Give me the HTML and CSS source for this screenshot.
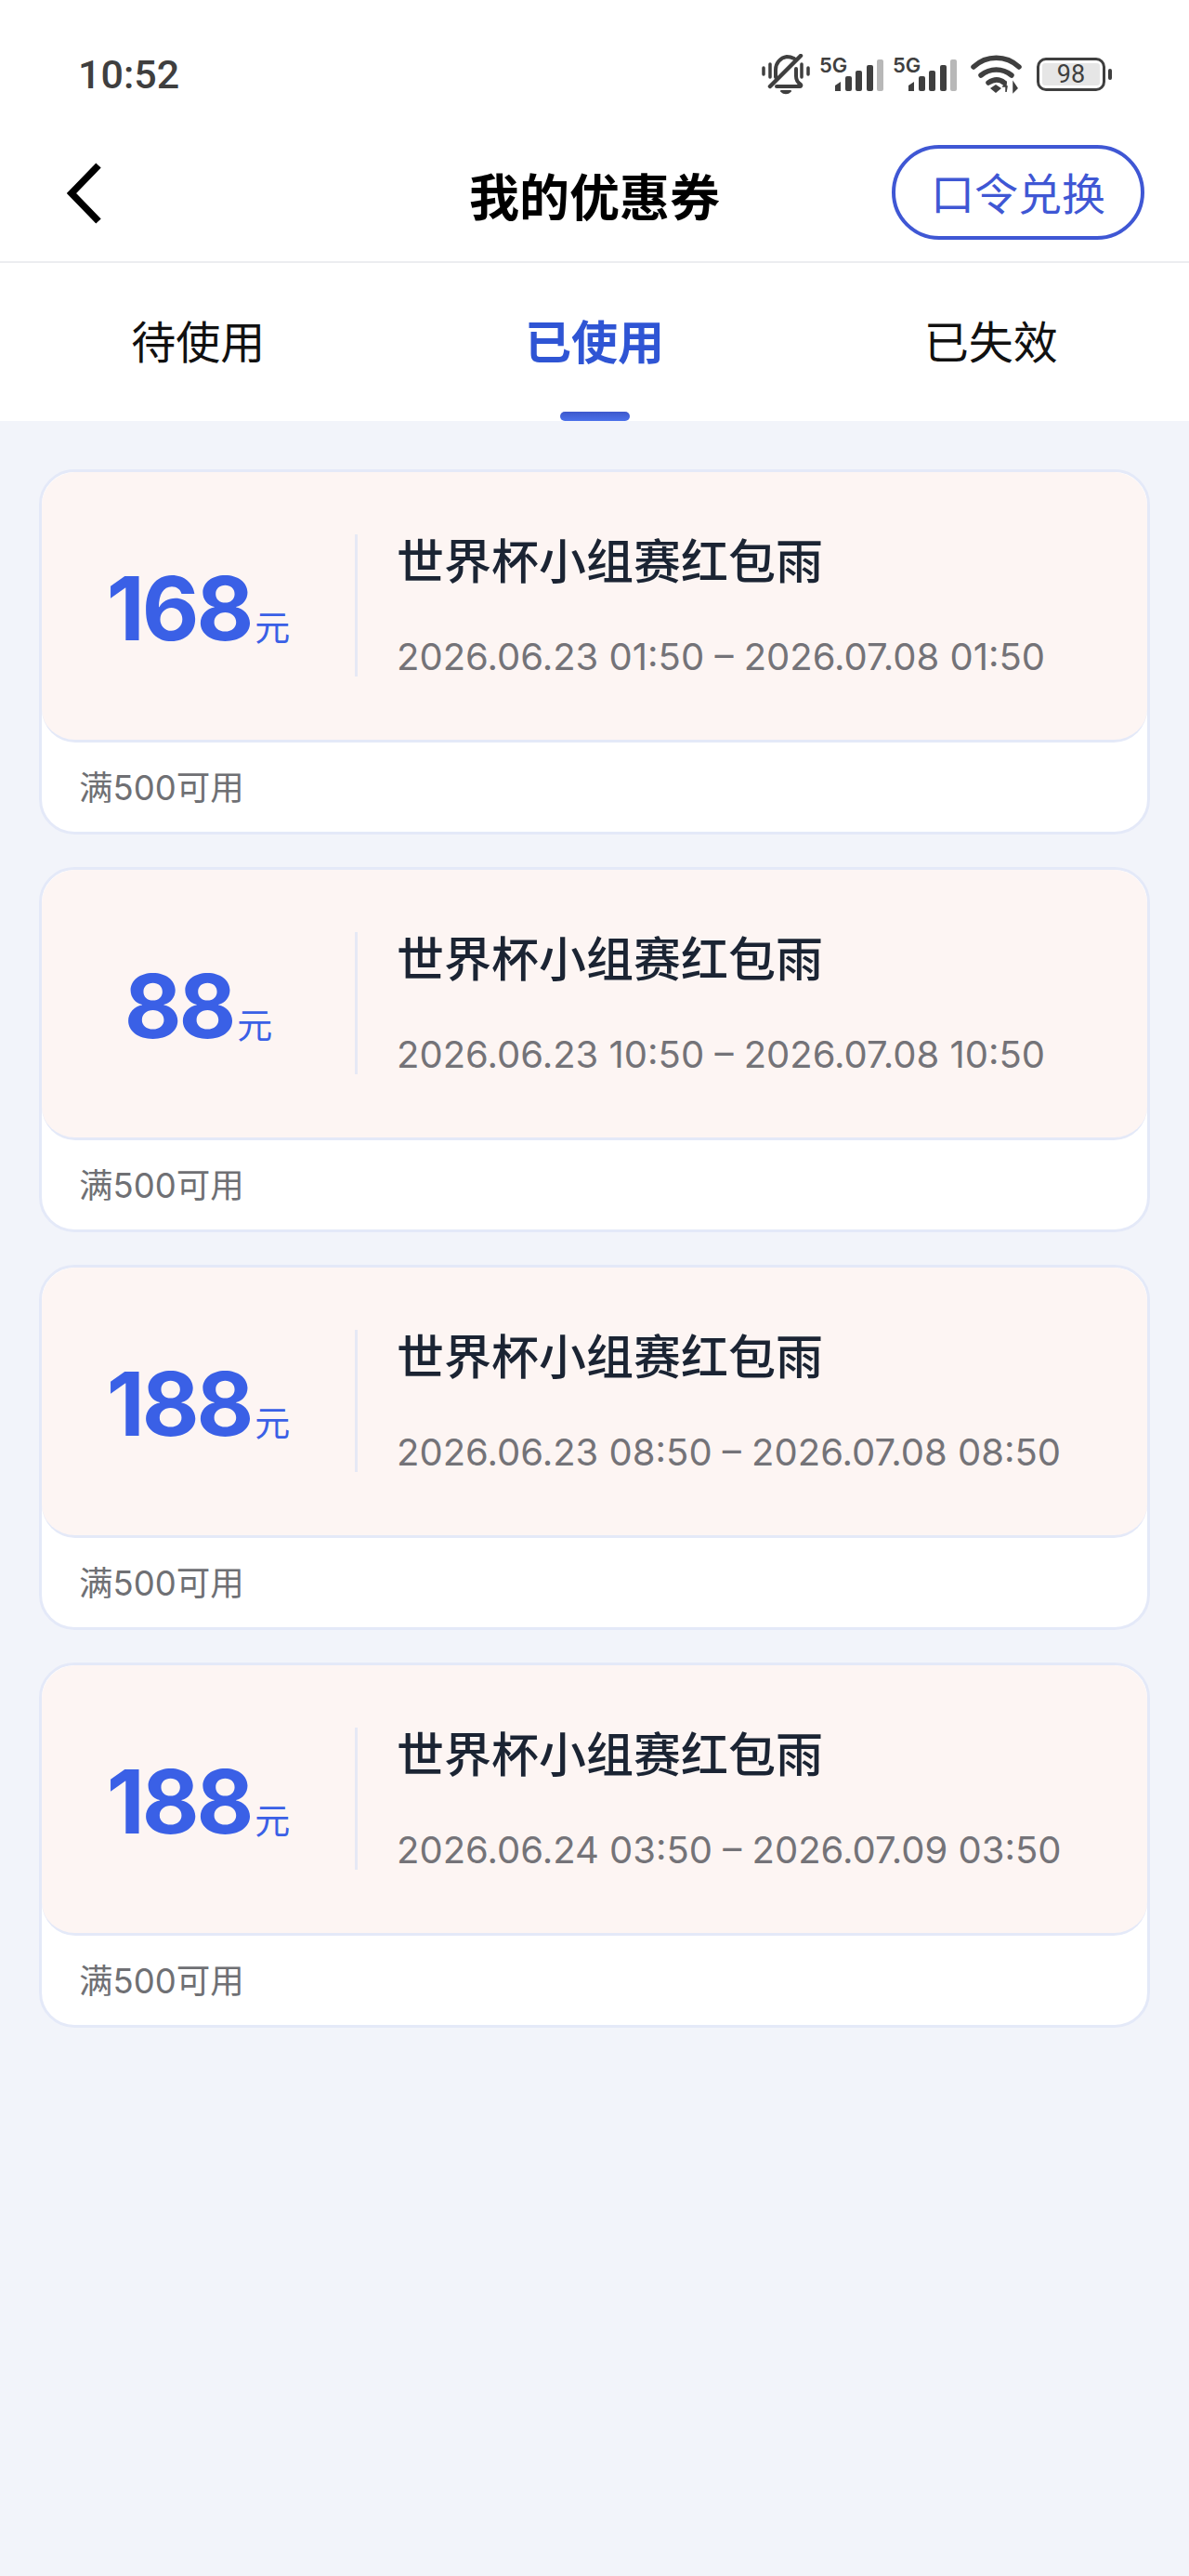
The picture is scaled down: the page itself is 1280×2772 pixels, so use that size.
FILE: index.html
```html
<!DOCTYPE html>
<html lang="zh-CN">

<head>
  <meta charset="UTF-8">
  <meta name="viewport" content="width=device-width, initial-scale=1.0">
  <title>我的优惠券</title>
  <link rel="stylesheet" href="styles.css">
</head>

<body>
  <div class="status-bar">
    <div class="status-time">10:52</div>
    <div class="status-icons">
      <svg class="icon-bell" width="52" height="44" viewBox="0 0 52 44" fill="none" stroke="#3f3f3f" stroke-linecap="round" stroke-linejoin="round">
        <path d="M2 15v7M9 11v14M43 11v14M50 15v7" stroke-width="3.5"/>
        <path d="M15 25V17c0-7 5-13 12-14 3 0 6 1 8 2" stroke-width="4"/>
        <path d="M37 16v8c0 4 2 7 5 9 1 1 0 2-1 2H16" stroke-width="4"/>
        <path d="M42 2 9 35" stroke-width="4.5"/>
        <path d="M21 40c3 3 7 3 10 0z" fill="#3f3f3f" stroke-width="2"/>
      </svg>
      <svg class="icon-signal" width="69" height="48" viewBox="0 -6 69 48">
        <text class="signal-text" x="0" y="16">5G</text>
        <g fill="#3f3f3f">
          <path d="M17 30l6-4v10h-6z"/>
          <rect x="28" y="20" width="7" height="16" rx="2"/>
          <rect x="39" y="14" width="7" height="22" rx="2"/>
          <rect x="51" y="8" width="7" height="28" rx="2"/>
        </g>
        <rect x="62" y="2" width="7" height="34" rx="2" fill="#b8b8b8"/>
      </svg>
      <svg class="icon-signal" width="69" height="48" viewBox="0 -6 69 48">
        <text class="signal-text" x="0" y="16">5G</text>
        <g fill="#3f3f3f">
          <path d="M17 30l6-4v10h-6z"/>
          <rect x="28" y="20" width="7" height="16" rx="2"/>
          <rect x="39" y="14" width="7" height="22" rx="2"/>
          <rect x="51" y="8" width="7" height="28" rx="2"/>
        </g>
        <rect x="62" y="2" width="7" height="34" rx="2" fill="#b8b8b8"/>
      </svg>
      <svg class="icon-wifi" width="55" height="42" viewBox="0 0 55 42" fill="none" stroke="#3f3f3f" stroke-width="5.5" stroke-linecap="round">
        <path d="M3 13c14-13 35-13 49 0"/>
        <path d="M11 22c10-8 23-8 33 0"/>
        <path d="M19 30c6-4 12-4 17 0"/>
        <path d="M21 36l6-4 6 4-6 5z" fill="#3f3f3f" stroke="none"/>
        <path d="M39 34l-4 0 3-4v10zM46 30v10l4-4z" fill="#3f3f3f" stroke="#3f3f3f" stroke-width="1.5"/>
      </svg>
      <div class="battery">
        <div class="battery-body"><span class="battery-level">98</span></div>
        <div class="battery-nub"></div>
      </div>
    </div>
  </div>

  <div class="nav-bar">
    <svg class="back-icon" width="40" height="68" viewBox="0 0 40 68" fill="none" stroke="#000" stroke-width="7.5">
      <path d="M36 4 7 34l29 30"/>
    </svg>
    <div class="nav-title">我的优惠券</div>
    <div class="redeem-btn">口令兑换</div>
  </div>

  <div class="tabs">
    <div class="tab">待使用</div>
    <div class="tab active">已使用</div>
    <div class="tab">已失效</div>
  </div>

  <div class="coupon-list">
    <div class="coupon">
      <div class="coupon-top">
        <div class="amount"><span class="amount-num">168</span><span class="amount-unit">元</span></div>
        <div class="coupon-info">
          <div class="coupon-name">世界杯小组赛红包雨</div>
          <div class="coupon-date">2026.06.23 01:50 – 2026.07.08 01:50</div>
        </div>
      </div>
      <div class="coupon-rule">满500可用</div>
    </div>

    <div class="coupon">
      <div class="coupon-top">
        <div class="amount"><span class="amount-num">88</span><span class="amount-unit">元</span></div>
        <div class="coupon-info">
          <div class="coupon-name">世界杯小组赛红包雨</div>
          <div class="coupon-date">2026.06.23 10:50 – 2026.07.08 10:50</div>
        </div>
      </div>
      <div class="coupon-rule">满500可用</div>
    </div>

    <div class="coupon">
      <div class="coupon-top">
        <div class="amount"><span class="amount-num">188</span><span class="amount-unit">元</span></div>
        <div class="coupon-info">
          <div class="coupon-name">世界杯小组赛红包雨</div>
          <div class="coupon-date">2026.06.23 08:50 – 2026.07.08 08:50</div>
        </div>
      </div>
      <div class="coupon-rule">满500可用</div>
    </div>

    <div class="coupon">
      <div class="coupon-top">
        <div class="amount"><span class="amount-num">188</span><span class="amount-unit">元</span></div>
        <div class="coupon-info">
          <div class="coupon-name">世界杯小组赛红包雨</div>
          <div class="coupon-date">2026.06.24 03:50 – 2026.07.09 03:50</div>
        </div>
      </div>
      <div class="coupon-rule">满500可用</div>
    </div>
  </div>
</body>

</html>
```

FILE: styles.css
```css
* {
  margin: 0;
  padding: 0;
  box-sizing: border-box;
}

body {
  font-family: "Inter", "Noto Sans CJK SC", sans-serif;
  background-color: #f2f4fa;
  min-height: 100vh;
}

.status-bar {
  display: flex;
  justify-content: space-between;
  align-items: center;
  height: 132px;
  padding: 28px 83px 0 84px;
  background-color: #fff;
}

.status-time {
  font-family: "Roboto", sans-serif;
  font-size: 43px;
  font-weight: 500;
  color: #3f3f3f;
}

.status-icons {
  display: flex;
  align-items: center;
}

.icon-signal {
  margin-left: 10px;
}

.signal-text {
  font-family: "Inter", sans-serif;
  font-size: 22px;
  font-weight: 600;
  fill: #3f3f3f;
}

.icon-wifi {
  margin-left: 15px;
}

.battery {
  display: flex;
  align-items: center;
  margin-left: 16px;
}

.battery-body {
  width: 74px;
  height: 36px;
  padding: 3px;
  border: 3px solid #3f3f3f;
  border-radius: 10px;
}

.battery-level {
  display: block;
  height: 100%;
  background-color: #e6e6e6;
  border-radius: 3px;
  font-family: "Roboto", sans-serif;
  font-size: 27px;
  line-height: 24px;
  text-align: center;
  color: #3f3f3f;
}

.battery-nub {
  width: 4px;
  height: 12px;
  margin-left: 3px;
  border-radius: 2px;
  background-color: #3f3f3f;
}

.nav-bar {
  display: grid;
  grid-template-columns: 1fr auto 1fr;
  align-items: center;
  height: 151px;
  padding: 0 48px 0 70px;
  background-color: #fff;
  border-bottom: 2px solid #ecedf0;
}

.back-icon {
  margin-top: 2px;
}

.nav-title {
  font-family: "Noto Sans CJK SC", sans-serif;
  font-size: 54px;
  font-weight: 700;
  color: #000;
  margin: 5px 0 0 -22px;
}

.redeem-btn {
  justify-self: end;
  width: 272px;
  height: 102px;
  border: 4px solid #3f57d4;
  border-radius: 51px;
  font-family: "Noto Sans CJK SC", sans-serif;
  font-size: 47px;
  line-height: 92px;
  text-align: center;
  color: #3f57d4;
}

.tabs {
  display: flex;
  height: 170px;
  background-color: #fff;
}

.tab {
  flex: 1;
  position: relative;
  font-family: "Noto Sans CJK SC", sans-serif;
  font-size: 48px;
  line-height: 164px;
  text-align: center;
  color: #111;
}

.tab.active {
  font-size: 50px;
  font-weight: 700;
  color: #2f55d4;
}

.tab.active::after {
  content: "";
  position: absolute;
  left: 50%;
  bottom: 0;
  width: 75px;
  height: 10px;
  margin-left: -37px;
  border-radius: 5px;
  background: linear-gradient(#3d58cc, #4a70ea);
}

.coupon-list {
  display: flex;
  flex-direction: column;
  gap: 35px;
  padding: 52px 42px;
}

.coupon {
  height: 393px;
  background-color: #fff;
  border: 3px solid #e4e9f8;
  border-radius: 38px;
}

.coupon-top {
  display: flex;
  align-items: flex-start;
  height: 291px;
  padding-top: 67px;
  background-color: #fdf5f3;
  border-bottom: 3px solid #e4e9f8;
  border-radius: 36px;
}

.amount {
  display: flex;
  justify-content: center;
  align-items: baseline;
  width: 340px;
  height: 153px;
  padding-top: 30px;
  border-right: 3px solid #e6e9f5;
}

.amount-num {
  font-size: 95px;
  font-weight: 700;
  line-height: 100px;
  letter-spacing: -3px;
  color: #3a60e6;
}

.amount-unit {
  margin-left: 4px;
  font-family: "Noto Sans CJK SC", sans-serif;
  font-size: 38px;
  color: #3a60e6;
}

.coupon-info {
  padding-left: 42px;
  margin-top: -4px;
}

.coupon-name {
  font-family: "Noto Sans CJK SC", sans-serif;
  font-size: 51px;
  font-weight: 500;
  line-height: 60px;
  color: #1b2433;
}

.coupon-date {
  margin-top: 51px;
  font-size: 40px;
  line-height: 50px;
  color: #747378;
}

.coupon-rule {
  padding: 27px 0 0 40px;
  font-family: "Inter", "Noto Sans CJK SC", sans-serif;
  font-size: 36.5px;
  line-height: 44px;
  color: #6f7074;
}
```
